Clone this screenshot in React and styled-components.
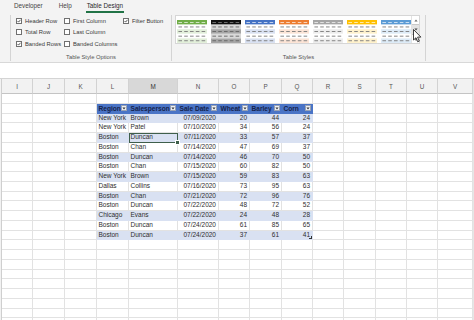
import React from 'react';
import styled, { createGlobalStyle, css } from 'styled-components';

const GlobalStyle = createGlobalStyle`
  html, body { margin: 0; padding: 0; background: #fff; width: 474px; height: 320px; overflow: hidden; }
  body { font-family: "Liberation Sans", Arial, sans-serif; }
  #root { width: 474px; height: 320px; overflow: hidden; }
`;

const Page = styled.div`
  width: 474px;
  height: 320px;
  display: flex;
  flex-direction: column;
  overflow: hidden;
  background: #fff;
`;

/* ---------- Ribbon ---------- */
const Ribbon = styled.div`
  flex-shrink: 0;
  height: 62px;
  background: #f3f3f3;
  border-bottom: 1px solid #d8d8d8;
  display: flex;
  flex-direction: column;
`;

const TabRow = styled.div`
  height: 15px;
  display: flex;
  padding-left: 6px;
`;

const Tab = styled.div`
  padding: 2px 7px 0;
  font-size: 6.3px;
  line-height: 8px;
  color: #444;
`;

const TabLabel = styled.span`
  display: inline-block;
  padding: 0 1px 1px;
  ${p => p.$active && css`
    color: #2b2b2b;
    border-bottom: 2px solid #217346;
    margin: 0 -1px;
  `}
`;

const Groups = styled.div`
  display: flex;
  height: 47px;
  padding-left: 10px;
`;

const Group = styled.div`
  box-sizing: border-box;
  height: 46px;
  width: ${p => p.$w}px;
  border-left: 1px solid #d4d4d4;
  ${p => p.$last && css`border-right: 1px solid #d4d4d4;`}
  display: flex;
  flex-direction: column;
`;

const GroupBody = styled.div`
  flex: 1;
  display: flex;
`;

const GroupLabel = styled.div`
  text-align: center;
  font-size: 5.8px;
  line-height: 8px;
  color: #555;
`;

const OptionGrid = styled.div`
  display: grid;
  grid-template-columns: 48px 59px auto;
  grid-auto-rows: 11.5px;
  padding-left: 5px;
`;

const Option = styled.div`
  display: flex;
  align-items: center;
  gap: 3px;
  font-size: 5.8px;
  color: #3a3a3a;
  white-space: nowrap;
`;

const Box = styled.span`
  box-sizing: border-box;
  width: 6px;
  height: 6px;
  border: 1px solid #707070;
  background: #fff;
  display: flex;
  align-items: center;
  justify-content: center;
`;

const Gallery = styled.div`
  box-sizing: border-box;
  margin-left: 3px;
  width: 245px;
  height: 29px;
  border: 1px solid #d6d6d6;
  background: #fff;
  display: flex;
`;

const ThumbList = styled.div`
  display: flex;
  gap: 4px;
  padding: 4px 0 0 1px;
`;

const ScrollCol = styled.div`
  position: relative;
  margin-left: auto;
  width: 8px;
  display: flex;
  flex-direction: column;
  border-left: 1px solid #e2e2e2;
`;

const ScrollBtn = styled.div`
  flex: 1;
  box-sizing: border-box;
  display: flex;
  align-items: center;
  justify-content: center;
  ${p => p.$hover && css`
    background: #e3e3e3;
    border-top: 1px solid #c9c9c9;
    border-bottom: 1px solid #c9c9c9;
  `}
`;

const Cursor = styled.svg`
  position: absolute;
  left: 1px;
  top: 13px;
`;

const Check = () => (
  <svg width="4" height="4" viewBox="0 0 4 4">
    <path d="M0.5 2 L1.6 3.1 L3.5 0.8" fill="none" stroke="#333" strokeWidth="0.8" />
  </svg>
);

const CheckOption = ({ checked, children }) => (
  <Option>
    <Box>{checked && <Check />}</Box>
    {children}
  </Option>
);

const Thumb = ({ head, band, alt = '#fff', dash = '#7b7b7b', headDash = 'rgba(255,255,255,0.75)' }) => {
  const rows = [0, 1, 2, 3];
  const cells = [0, 1, 2, 3, 4];
  return (
    <svg width="30" height="23" viewBox="0 0 30 23">
      <rect x="0" y="0" width="30" height="4.6" fill={head} />
      {cells.map(j => (
        <rect key={'h' + j} x={1.4 + j * 5.8} y="2" width="3.6" height="0.9" fill={headDash} />
      ))}
      {rows.map(i => (
        <g key={i}>
          <rect x="0" y={4.6 + i * 4.6} width="30" height="4.6" fill={i % 2 === 1 ? band : alt} />
          {cells.map(j => (
            <rect key={j} x={1.4 + j * 5.8} y={6.5 + i * 4.6} width="3.6" height="0.9" fill={dash} />
          ))}
        </g>
      ))}
    </svg>
  );
};

const thumbs = [
  { head: '#70ad47', band: '#e2efda' },
  { head: '#111', band: '#a6a6a6', alt: '#d9d9d9', dash: '#666', headDash: '#777' },
  { head: '#4472c4', band: '#d9e1f2' },
  { head: '#ed7d31', band: '#fce4d6' },
  { head: '#a5a5a5', band: '#ededed' },
  { head: '#ffc000', band: '#fff2cc' },
  { head: '#5b9bd5', band: '#ddebf7' },
];

/* ---------- Sheet ---------- */
const Gap = styled.div`
  flex-shrink: 0;
  height: 15px;
  background: #fff;
`;

const colDefs = [
  { k: '', w: 2 },
  { k: 'I', w: 31 }, { k: 'J', w: 32 }, { k: 'K', w: 32 }, { k: 'L', w: 32 },
  { k: 'M', w: 49 }, { k: 'N', w: 41 }, { k: 'O', w: 31 }, { k: 'P', w: 32 },
  { k: 'Q', w: 31 }, { k: 'R', w: 31 }, { k: 'S', w: 32 }, { k: 'T', w: 31 },
  { k: 'U', w: 31 }, { k: 'V', w: 35 },
];

const Sheet = styled.div`
  display: grid;
  grid-template-columns: ${colDefs.map(c => c.w + 'px').join(' ')} 1px;
  grid-template-rows: 15px;
  grid-auto-rows: 9.75px;
  border-top: 1px solid #d4d4d4;
`;

const ColHead = styled.div`
  box-sizing: border-box;
  border-right: 1px solid #d2d2d2;
  border-bottom: 1px solid #c4c4c4;
  background: ${p => (p.$selected ? '#d8d8d8' : '#f2f2f2')};
  color: ${p => (p.$selected ? '#333' : '#555')};
  font-size: 6.3px;
  display: flex;
  align-items: center;
  justify-content: center;
`;

const Stub = styled.div`
  box-sizing: border-box;
  border-right: 1px solid #cfcfcf;
  background: #f2f2f2;
`;

const Filler = styled.div`
  background: #fff;
  border-left: 1px solid #e6e6e6;
`;

const Cell = styled.div`
  box-sizing: border-box;
  background: ${p => p.$fill || '#fff'};
  border-right: 1px solid ${p => p.$fill || '#e2e2e2'};
  border-bottom: 1px solid ${p => p.$fill || '#e2e2e2'};
  font-size: 6.5px;
  line-height: 8.75px;
  color: #2e2e2e;
  padding: 0 2px 0 1.5px;
  white-space: nowrap;
  overflow: hidden;
  text-align: ${p => p.$align || 'left'};
  ${p => p.$selected && css`
    position: relative;
    overflow: visible;
    z-index: 2;
    outline: 1.5px solid #3f5f4b;
    outline-offset: -1px;
    &::after {
      content: '';
      position: absolute;
      right: -3px;
      bottom: -3px;
      width: 3px;
      height: 3px;
      background: #3f5f4b;
      border: 1px solid #fff;
    }
  `}
  ${p => p.$corner && css`
    position: relative;
    overflow: visible;
    &::after {
      content: '';
      position: absolute;
      right: 0;
      bottom: 0;
      width: 2px;
      height: 2px;
      border-right: 1px solid #333;
      border-bottom: 1px solid #333;
    }
  `}
`;

const HeadCell = styled.div`
  box-sizing: border-box;
  background: #4a74c6;
  border-right: 1px solid #4a74c6;
  border-bottom: 1px solid #4a74c6;
  display: flex;
  align-items: center;
  justify-content: space-between;
  padding: 0 1px 0 1.5px;
  font-size: 6.6px;
  font-weight: bold;
  color: #15224a;
  white-space: nowrap;
  overflow: hidden;
`;

const FilterBtn = styled.span`
  flex-shrink: 0;
  box-sizing: border-box;
  width: 6px;
  height: 6px;
  background: #eef1f6;
  border: 1px solid #98a2b4;
  display: flex;
  align-items: center;
  justify-content: center;
`;

const Arrow = () => (
  <svg width="4" height="3" viewBox="0 0 4 3">
    <path d="M0.4 0.6 L3.6 0.6 L2 2.5 Z" fill="#333" />
  </svg>
);

const headers = ['Region', 'Salesperson', 'Sale Date', 'Wheat', 'Barley', 'Corn'];
const aligns = ['left', 'left', 'right', 'right', 'right', 'right'];
const data = [
  ['New York', 'Brown', '07/09/2020', 20, 44, 24],
  ['New York', 'Patel', '07/10/2020', 34, 56, 24],
  ['Boston', 'Duncan', '07/11/2020', 33, 57, 37],
  ['Boston', 'Chan', '07/14/2020', 47, 69, 37],
  ['Boston', 'Duncan', '07/14/2020', 46, 70, 50],
  ['Boston', 'Chan', '07/15/2020', 60, 82, 50],
  ['New York', 'Brown', '07/15/2020', 59, 83, 63],
  ['Dallas', 'Collins', '07/16/2020', 73, 95, 63],
  ['Boston', 'Chan', '07/21/2020', 72, 96, 76],
  ['Boston', 'Duncan', '07/22/2020', 48, 72, 52],
  ['Chicago', 'Evans', '07/22/2020', 24, 48, 28],
  ['Boston', 'Duncan', '07/24/2020', 61, 85, 65],
  ['Boston', 'Duncan', '07/24/2020', 37, 61, 41],
];

const TABLE_COL = 4; // L
const TOTAL_ROWS = 24;

function renderRow(r) {
  const out = [];
  colDefs.forEach((c, ci) => {
    const key = `${r}-${ci}`;
    if (ci === 0) {
      out.push(<Stub key={key} />);
      return;
    }
    const t = ci - TABLE_COL;
    const inTable = t >= 0 && t < headers.length;
    if (r === 1 && inTable) {
      out.push(
        <HeadCell key={key}>
          <span>{headers[t]}</span>
          <FilterBtn><Arrow /></FilterBtn>
        </HeadCell>
      );
      return;
    }
    const di = r - 2;
    if (inTable && di >= 0 && di < data.length) {
      const fill = di % 2 === 0 ? '#d9e1f2' : null;
      out.push(
        <Cell
          key={key}
          $fill={fill}
          $align={aligns[t]}
          $selected={di === 2 && t === 1}
          $corner={di === data.length - 1 && t === headers.length - 1}
        >
          {data[di][t]}
        </Cell>
      );
      return;
    }
    out.push(<Cell key={key} />);
  });
  out.push(<Filler key={`${r}-f`} />);
  return out;
}

export default function App() {
  return (
    <Page>
      <GlobalStyle />
      <Ribbon>
        <TabRow>
          <Tab><TabLabel>Developer</TabLabel></Tab>
          <Tab><TabLabel>Help</TabLabel></Tab>
          <Tab><TabLabel $active>Table Design</TabLabel></Tab>
        </TabRow>
        <Groups>
          <Group $w={161}>
            <GroupBody>
              <OptionGrid>
                <CheckOption checked>Header Row</CheckOption>
                <CheckOption>First Column</CheckOption>
                <CheckOption checked>Filter Button</CheckOption>
                <CheckOption>Total Row</CheckOption>
                <CheckOption>Last Column</CheckOption>
                <span />
                <CheckOption checked>Banded Rows</CheckOption>
                <CheckOption>Banded Columns</CheckOption>
              </OptionGrid>
            </GroupBody>
            <GroupLabel>Table Style Options</GroupLabel>
          </Group>
          <Group $w={255} $last>
            <GroupBody>
              <Gallery>
                <ThumbList>
                  {thumbs.map((t, i) => <Thumb key={i} {...t} />)}
                </ThumbList>
                <ScrollCol>
                  <ScrollBtn>
                    <svg width="4" height="3" viewBox="0 0 4 3"><path d="M0.4 2.5 L3.6 2.5 L2 0.5 Z" fill="#666" /></svg>
                  </ScrollBtn>
                  <ScrollBtn $hover>
                    <svg width="4" height="3" viewBox="0 0 4 3"><path d="M0.4 0.5 L3.6 0.5 L2 2.5 Z" fill="#444" /></svg>
                  </ScrollBtn>
                  <ScrollBtn>
                    <svg width="4" height="4" viewBox="0 0 4 4"><path d="M0.4 0.6 L3.6 0.6 M0.4 1.6 L3.6 1.6 L2 3.6 Z" fill="#666" stroke="#666" strokeWidth="0.5" /></svg>
                  </ScrollBtn>
                  <Cursor width="9" height="14" viewBox="0 0 9 14">
                    <path d="M0.5 0.5 L0.5 11 L3 8.7 L4.7 12.8 L6.3 12.1 L4.6 8.1 L7.9 8.1 Z" fill="#fff" stroke="#111" strokeWidth="0.8" strokeLinejoin="round" />
                  </Cursor>
                </ScrollCol>
              </Gallery>
            </GroupBody>
            <GroupLabel>Table Styles</GroupLabel>
          </Group>
        </Groups>
      </Ribbon>
      <Gap />
      <Sheet>
        {colDefs.map((c, ci) =>
          ci === 0 ? <Stub key={'h' + ci} /> : <ColHead key={'h' + ci} $selected={c.k === 'M'}>{c.k}</ColHead>
        )}
        <Filler />
        {Array.from({ length: TOTAL_ROWS }, (_, i) => renderRow(i))}
      </Sheet>
    </Page>
  );
}
